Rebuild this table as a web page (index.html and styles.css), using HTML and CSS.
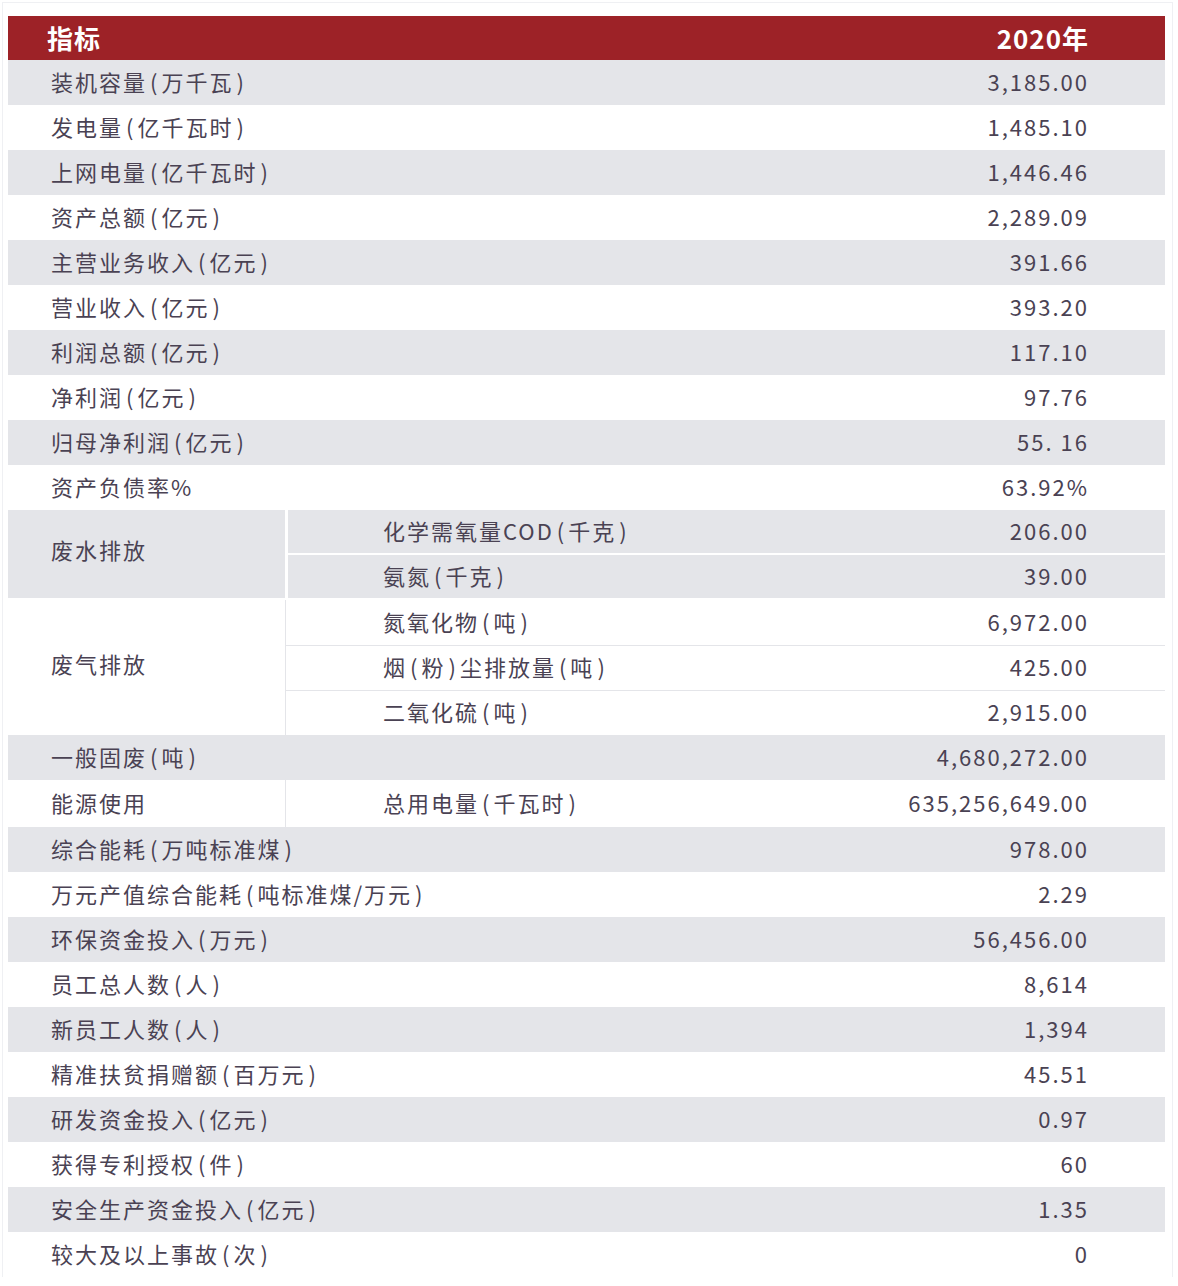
FILE: index.html
```html
<!DOCTYPE html>
<html lang="zh-CN">
<head>
<meta charset="utf-8">
<title>指标</title>
<link rel="stylesheet" href="styles.css">
</head>
<body>
<div class="frame">
  <div class="sheet">
    <div class="row head"><span class="label">指标</span><span class="val">2020年</span></div>
    <div class="row gray"><span class="label">装机容量<span class="p">(</span>万千瓦<span class="p">)</span></span><span class="val">3,185.00</span></div>
    <div class="row"><span class="label">发电量<span class="p">(</span>亿千瓦时<span class="p">)</span></span><span class="val">1,485.10</span></div>
    <div class="row gray"><span class="label">上网电量<span class="p">(</span>亿千瓦时<span class="p">)</span></span><span class="val">1,446.46</span></div>
    <div class="row"><span class="label">资产总额<span class="p">(</span>亿元<span class="p">)</span></span><span class="val">2,289.09</span></div>
    <div class="row gray"><span class="label">主营业务收入<span class="p">(</span>亿元<span class="p">)</span></span><span class="val">391.66</span></div>
    <div class="row"><span class="label">营业收入<span class="p">(</span>亿元<span class="p">)</span></span><span class="val">393.20</span></div>
    <div class="row gray"><span class="label">利润总额<span class="p">(</span>亿元<span class="p">)</span></span><span class="val">117.10</span></div>
    <div class="row"><span class="label">净利润<span class="p">(</span>亿元<span class="p">)</span></span><span class="val">97.76</span></div>
    <div class="row gray"><span class="label">归母净利润<span class="p">(</span>亿元<span class="p">)</span></span><span class="val">55. 16</span></div>
    <div class="row"><span class="label">资产负债率%</span><span class="val">63.92%</span></div>

    <div class="group gray-group">
      <div class="glabel nudge">废水排放</div>
      <div class="subs">
        <div class="sub"><span class="label">化学需氧量COD<span class="p">(</span>千克<span class="p">)</span></span><span class="val">206.00</span></div>
        <div class="sub"><span class="label">氨氮<span class="p">(</span>千克<span class="p">)</span></span><span class="val">39.00</span></div>
      </div>
    </div>

    <div class="group white-group">
      <div class="glabel nudge">废气排放</div>
      <div class="subs">
        <div class="sub"><span class="label">氮氧化物<span class="p">(</span>吨<span class="p">)</span></span><span class="val">6,972.00</span></div>
        <div class="sub"><span class="label">烟<span class="p">(</span>粉<span class="p">)</span>尘排放量<span class="p">(</span>吨<span class="p">)</span></span><span class="val">425.00</span></div>
        <div class="sub"><span class="label">二氧化硫<span class="p">(</span>吨<span class="p">)</span></span><span class="val">2,915.00</span></div>
      </div>
    </div>

    <div class="row gray"><span class="label">一般固废<span class="p">(</span>吨<span class="p">)</span></span><span class="val">4,680,272.00</span></div>

    <div class="group white-group tall">
      <div class="glabel">能源使用</div>
      <div class="subs">
        <div class="sub"><span class="label">总用电量<span class="p">(</span>千瓦时<span class="p">)</span></span><span class="val">635,256,649.00</span></div>
      </div>
    </div>

    <div class="row gray"><span class="label">综合能耗<span class="p">(</span>万吨标准煤<span class="p">)</span></span><span class="val">978.00</span></div>
    <div class="row"><span class="label">万元产值综合能耗<span class="p">(</span>吨标准煤/万元<span class="p">)</span></span><span class="val">2.29</span></div>
    <div class="row gray"><span class="label">环保资金投入<span class="p">(</span>万元<span class="p">)</span></span><span class="val">56,456.00</span></div>
    <div class="row"><span class="label">员工总人数<span class="p">(</span>人<span class="p">)</span></span><span class="val">8,614</span></div>
    <div class="row gray"><span class="label">新员工人数<span class="p">(</span>人<span class="p">)</span></span><span class="val">1,394</span></div>
    <div class="row"><span class="label">精准扶贫捐赠额<span class="p">(</span>百万元<span class="p">)</span></span><span class="val">45.51</span></div>
    <div class="row gray"><span class="label">研发资金投入<span class="p">(</span>亿元<span class="p">)</span></span><span class="val">0.97</span></div>
    <div class="row"><span class="label">获得专利授权<span class="p">(</span>件<span class="p">)</span></span><span class="val">60</span></div>
    <div class="row gray"><span class="label">安全生产资金投入<span class="p">(</span>亿元<span class="p">)</span></span><span class="val">1.35</span></div>
    <div class="row"><span class="label">较大及以上事故<span class="p">(</span>次<span class="p">)</span></span><span class="val">0</span></div>
  </div>
</div>
</body>
</html>
```

FILE: styles.css
```css
html, body {
  margin: 0;
  padding: 0;
  background: #ffffff;
}

body {
  font-family: "Noto Sans CJK SC", "Noto Sans", sans-serif;
  color: #4a4253;
}

.frame {
  margin: 2px 5px 0 2px;
  border: 1px solid #eff0f3;
  border-bottom: none;
  padding: 13px 7px 8px 5px;
  height: 1275px;
  box-sizing: border-box;
}

.sheet {
  display: flex;
  flex-direction: column;
}

.row {
  display: flex;
  align-items: center;
  height: 45px;
  padding: 0 76px 4px 43px;
  box-sizing: border-box;
  font-size: 22px;
  letter-spacing: 2px;
  background: #ffffff;
}

.row.gray {
  background: #e4e5e9;
}

.row.head {
  height: 44px;
  background: #9d2227;
  color: #ffffff;
  font-weight: 700;
  font-size: 26px;
  letter-spacing: 1px;
  padding: 0 76px 2px 39px;
}

.label {
  flex: 1;
  white-space: nowrap;
}

.val {
  text-align: right;
  white-space: nowrap;
}

.p {
  padding: 0 2px 0 3px;
}

.group {
  display: flex;
  font-size: 22px;
  letter-spacing: 2px;
}

.glabel {
  width: 277px;
  flex: none;
  display: flex;
  align-items: center;
  padding-left: 43px;
  box-sizing: border-box;
  padding-bottom: 4px;
}

.glabel.nudge {
  padding-bottom: 10px;
}

.subs {
  flex: 1;
  display: flex;
  flex-direction: column;
}

.sub {
  display: flex;
  align-items: center;
  height: 45px;
  padding: 0 76px 4px 95px;
  box-sizing: border-box;
}

.gray-group .glabel {
  background: #e4e5e9;
  margin-bottom: 2px;
}

.gray-group .subs {
  border-left: 3px solid #ffffff;
}

.gray-group .sub {
  background: #e4e5e9;
  height: 43px;
}

.gray-group .sub + .sub {
  margin-top: 2px;
}

.gray-group .sub:last-child {
  margin-bottom: 2px;
}

.white-group .subs {
  border-left: 1px solid #e4e5e9;
}

.white-group .sub {
  padding-left: 97px;
}

.white-group .sub + .sub {
  border-top: 1px solid #e4e5e9;
}

.white-group.tall .sub {
  height: 47px;
}
```
